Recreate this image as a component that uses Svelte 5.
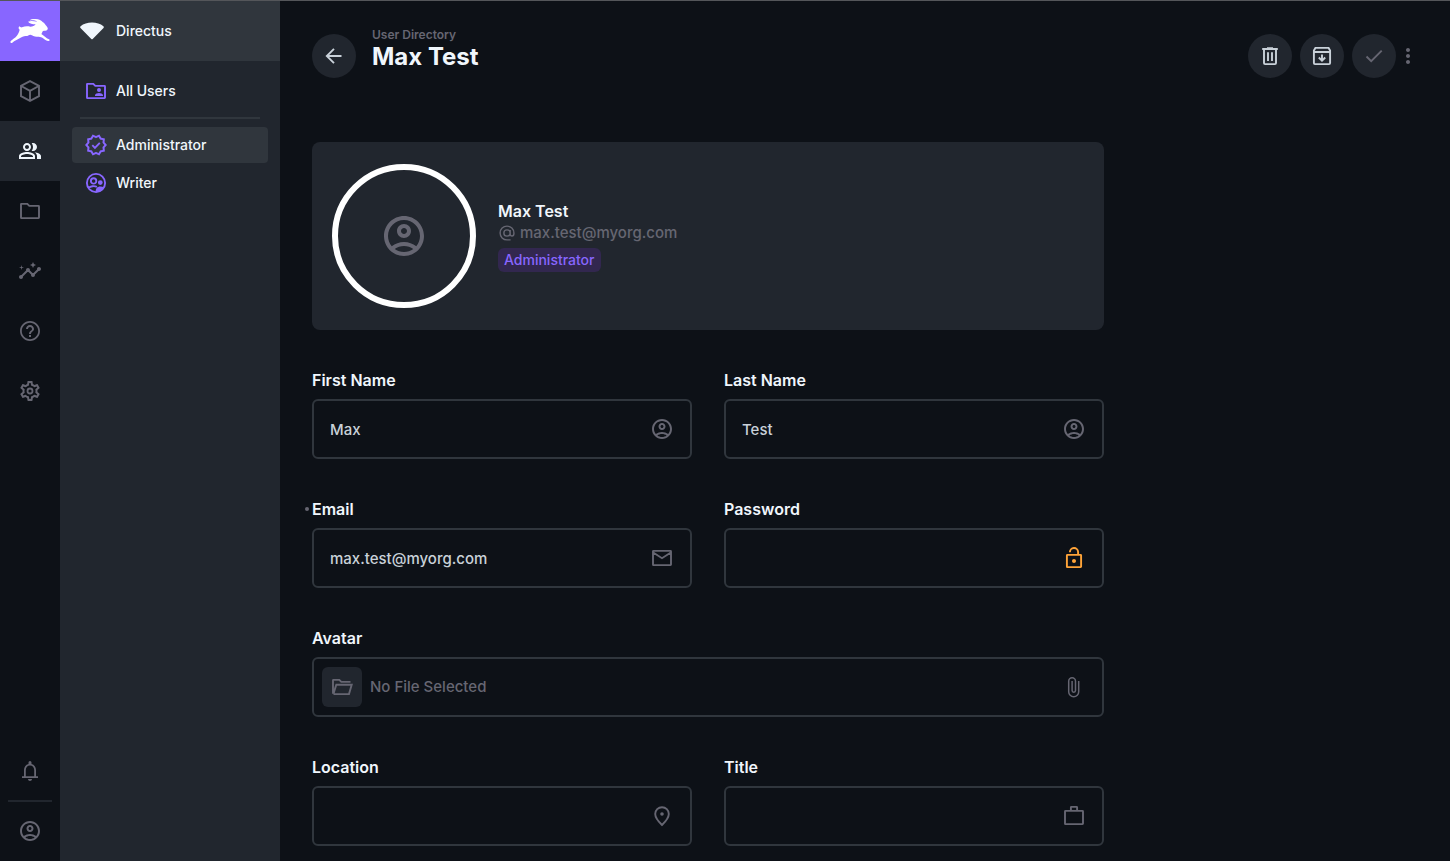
<script>
  const paths = {
    people: 'M16.67 13.13C18.04 14.06 19 15.32 19 17v3h4v-3c0-2.18-3.57-3.47-6.33-3.87z M15 12c2.21 0 4-1.79 4-4s-1.79-4-4-4c-.47 0-.91.1-1.33.24C14.5 5.27 15 6.58 15 8s-.5 2.73-1.33 3.76c.42.14.86.24 1.33.24z M9 12c2.21 0 4-1.79 4-4s-1.79-4-4-4-4 1.79-4 4 1.79 4 4 4zm0-6c1.1 0 2 .9 2 2s-.9 2-2 2-2-.9-2-2 .9-2 2-2z M9 13c-2.67 0-8 1.34-8 4v3h16v-3c0-2.66-5.33-4-8-4zm6 5H3v-.99C3.2 16.29 6.3 15 9 15s5.8 1.29 6 2v1z',
    insights: 'M21 8c-1.45 0-2.26 1.44-1.93 2.51l-3.55 3.56c-.3-.09-.74-.09-1.04 0l-2.55-2.55C12.27 10.45 11.46 9 10 9c-1.45 0-2.27 1.44-1.93 2.52l-4.56 4.55C2.44 15.74 1 16.55 1 18c0 1.1.9 2 2 2 1.45 0 2.26-1.44 1.93-2.51l4.55-4.56c.3.09.74.09 1.04 0l2.55 2.55C12.73 16.55 13.54 18 15 18c1.45 0 2.27-1.44 1.93-2.52l3.56-3.55C21.56 12.26 23 11.45 23 10c0-1.1-.9-2-2-2z M15 9l.94-2.07L18 6l-2.06-.93L15 3l-.92 2.07L12 6l2.08.93z M3.5 11L4 9l2-.5L4 8l-.5-2L3 8l-2 .5L3 9z',
    account: 'M12 2C6.48 2 2 6.48 2 12s4.48 10 10 10 10-4.48 10-10S17.52 2 12 2zM7.35 18.5C8.66 17.56 10.26 17 12 17s3.34.56 4.65 1.5c-1.31.94-2.91 1.5-4.65 1.5s-3.34-.56-4.65-1.5zm10.79-1.38C16.45 15.8 14.32 15 12 15s-4.45.8-6.14 2.12C4.7 15.73 4 13.95 4 12c0-4.42 3.58-8 8-8s8 3.58 8 8c0 1.95-.7 3.73-1.86 5.12z M12 6c-1.93 0-3.5 1.57-3.5 3.5S10.07 13 12 13s3.5-1.57 3.5-3.5S13.93 6 12 6zm0 5c-.83 0-1.5-.67-1.5-1.5S11.17 8 12 8s1.5.67 1.5 1.5S12.83 11 12 11z',
    help: 'M11 18h2v-2h-2v2zm1-16C6.48 2 2 6.48 2 12s4.48 10 10 10 10-4.48 10-10S17.52 2 12 2zm0 18.2c-4.5 0-8.2-3.7-8.2-8.2S7.5 3.8 12 3.8s8.2 3.7 8.2 8.2-3.7 8.2-8.2 8.2zm0-14.2c-2.21 0-4 1.79-4 4h2c0-1.1.9-2 2-2s2 .9 2 2c0 2-3 1.75-3 5h2c0-2.25 3-2.5 3-5 0-2.21-1.79-4-4-4z',
    settings: 'M19.43 12.98c.04-.32.07-.64.07-.98 0-.34-.03-.66-.07-.98l2.11-1.65c.19-.15.24-.42.12-.64l-2-3.46c-.09-.16-.26-.25-.44-.25-.06 0-.12.01-.17.03l-2.49 1c-.52-.4-1.08-.73-1.69-.98l-.38-2.65C14.46 2.18 14.25 2 14 2h-4c-.25 0-.46.18-.49.42l-.38 2.65c-.61.25-1.17.59-1.69.98l-2.49-1c-.06-.02-.12-.03-.18-.03-.17 0-.34.09-.43.25l-2 3.46c-.13.22-.07.49.12.64l2.11 1.65c-.04.32-.07.65-.07.98 0 .33.03.66.07.98l-2.11 1.65c-.19.15-.24.42-.12.64l2 3.46c.09.16.26.25.44.25.06 0 .12-.01.17-.03l2.49-1c.52.4 1.08.73 1.69.98l.38 2.65c.03.24.24.42.49.42h4c.25 0 .46-.18.49-.42l.38-2.65c.61-.25 1.17-.59 1.69-.98l2.49 1c.06.02.12.03.18.03.17 0 .34-.09.43-.25l2-3.46c.12-.22.07-.49-.12-.64l-2.11-1.65zm-1.98-1.71c.04.31.05.52.05.73 0 .21-.02.43-.05.73l-.14 1.13.89.7 1.08.84-.7 1.21-1.27-.51-1.04-.42-.9.68c-.43.32-.84.56-1.25.73l-1.06.43-.16 1.13-.2 1.35h-1.4l-.19-1.35-.16-1.13-1.06-.43c-.43-.18-.83-.41-1.23-.71l-.91-.7-1.06.43-1.27.51-.7-1.21 1.08-.84.89-.7-.14-1.13c-.03-.31-.05-.54-.05-.74s.02-.43.05-.73l.14-1.13-.89-.7-1.08-.84.7-1.21 1.27.51 1.04.42.9-.68c.43-.32.84-.56 1.25-.73l1.06-.43.16-1.13.2-1.35h1.39l.19 1.35.16 1.13 1.06.43c.43.18.83.41 1.23.71l.91.7 1.06-.43 1.27-.51.7 1.21-1.07.85-.89.7.14 1.13z M12 8.6a3.4 3.4 0 1 0 0 6.8 3.4 3.4 0 0 0 0-6.8zm0 5a1.6 1.6 0 1 1 0-3.2 1.6 1.6 0 0 1 0 3.2z',
    verified: 'M23 11.99l-2.44-2.79.34-3.69-3.61-.82L15.4 1.5 12 2.96 8.6 1.5 6.71 4.69 3.1 5.5l.34 3.7L1 11.99l2.44 2.79-.34 3.7 3.61.82 1.89 3.2 3.4-1.47 3.4 1.46 1.89-3.19 3.61-.82-.34-3.69L23 11.99zm-3.95 1.48l-.56.65.08.85.18 1.95-1.9.43-.84.19-.44.74-.99 1.68-1.78-.77-.8-.34-.79.34-1.78.77-.99-1.67-.44-.74-.84-.19-1.9-.43.18-1.96.08-.85-.56-.65L3.67 12l1.29-1.48.56-.65-.09-.86-.18-1.94 1.9-.43.84-.19.44-.74.99-1.68 1.78.77.8.34.79-.34 1.78-.77.99 1.68.44.74.84.19 1.9.43-.18 1.95-.08.85.56.65 1.29 1.47-1.28 1.48z',
    bell: 'M12 22c1.1 0 2-.9 2-2h-4c0 1.1.9 2 2 2zM18 17.2V11c0-3-1.7-5.4-4.5-6.1V3.5a1.5 1.5 0 0 0-3 0v1.4C7.7 5.6 6 8 6 11v6.2H4V19h16v-1.8h-2zm-1.8 0H7.8V11c0-2.5 1.7-4.4 4.2-4.4s4.2 1.9 4.2 4.4v6.2z',
    lock: 'M12 17c1.1 0 2-.9 2-2s-.9-2-2-2-2 .9-2 2 .9 2 2 2z',
    more: 'M12 8c1.1 0 2-.9 2-2s-.9-2-2-2-2 .9-2 2 .9 2 2 2zm0 2c-1.1 0-2 .9-2 2s.9 2 2 2 2-.9 2-2-.9-2-2-2zm0 6c-1.1 0-2 .9-2 2s.9 2 2 2 2-.9 2-2-.9-2-2-2z',
    folderUser: 'M15 13a2 2 0 1 0 0-4 2 2 0 0 0 0 4zM11 17v-.8c0-1.4 2.6-2.2 4-2.2s4 .8 4 2.2v.8z',
    writer: 'M16.3 14a2.4 2.4 0 1 0 0-4.8 2.4 2.4 0 0 0 0 4.8zM11.6 21c0-3.2 1.5-5.4 4.7-5.4 1.5 0 2.9.3 3.9.8A9.5 9.5 0 0 1 11.6 21z'
  };

  const strokes = {
    box: 'M12 2.1l9 4.8v10.2l-9 4.8-9-4.8V6.9zM3.2 7l8.8 4.8L20.8 7M12 11.8v10',
    folder: 'M3 5.2c0-.2.1-.3.3-.3H9.3l2 2H20.5c.3 0 .5.2.5.5V18.6c0 .3-.2.5-.5.5H3.5a.5.5 0 0 1-.5-.5z',
    folderUser: 'M3 5.2c0-.2.1-.3.3-.3H9.3l2 2H20.5c.3 0 .5.2.5.5V18.6c0 .3-.2.5-.5.5H3.5a.5.5 0 0 1-.5-.5z',
    folderOpen: 'M3 18.7V5.3c0-.2.1-.4.4-.4H9.3l2 2H20.5M3.5 19.1H19l2.7-9.4H6.3L3.4 18.9',
    verified: 'M8.3 12.2l2.6 2.6 4.9-4.9',
    writer: 'M21.1 12a9.1 9.1 0 1 1-18.2 0 9.1 9.1 0 0 1 18.2 0zM12.3 9.9a2.7 2.7 0 1 1-5.4 0 2.7 2.7 0 0 1 5.4 0zM4.6 17c1.8-2 5.6-2.4 8.3-1.2',
    back: 'M19.5 12H5M12 4.800L4.800 12l7.200 7.200',
    trash: 'M4.200 5h15.600M9 4.200h6M6 5.400V19c0 .7.4 1.100 1.100 1.100h9.800c.7 0 1.100-.4 1.100-1.100V5.400M10 8.300v8.800M14 8.300v8.800',
    archive: 'M3.900 7.500V19c0 .7.4 1.100 1.100 1.100h14c.7 0 1.100-.4 1.100-1.100V6.400l-1.500-2.500H5.400L3.900 6.400V8H20M12 10.500v6M8.800 13.500l3.200 3.200 3.200-3.200',
    check: 'M4.500 12.500l4.700 4.700L19.700 6.700',
    mail: 'M3.500 4.900h17c.3 0 .5.2.5.5v13.200c0 .3-.2.5-.5.5h-17a.5.5 0 0 1-.5-.5V5.400c0-.3.2-.5.5-.5zM3.200 6.500l8.800 5.700 8.800-5.700',
    lock: 'M5.400 8.900h13.200c.3 0 .5.2.5.5v11.200c0 .3-.2.5-.5.5H5.400a.5.5 0 0 1-.5-.5V9.400c0-.3.2-.5.5-.5zM7.900 6.300a4.100 4.100 0 0 1 8.200-.3v3',
    clip: 'M16.700 6v10.800a5 5 0 0 1-10 0V6.200a3.400 3.400 0 0 1 6.800 0v9.400a1.700 1.700 0 0 1-3.400 0V6',
    pin: 'M12 21c-3.900-3.800-6.800-7.400-6.800-11a6.800 6.800 0 0 1 13.600 0c0 3.600-2.900 7.200-6.800 11z',
    work: 'M3.500 6.900h17c.3 0 .5.2.5.5v12.200c0 .3-.2.5-.5.5h-17a.5.5 0 0 1-.5-.5V7.400c0-.3.2-.5.5-.5zM8.900 6.500V3.400c0-.3.2-.5.5-.5h5.200c.3 0 .5.2.5.5v3.100',
    at: 'M16.200 12a4.200 4.200 0 1 1-8.400 0 4.200 4.200 0 0 1 8.400 0zM16.200 8v5.400c0 1.600 1 2.600 2.500 2.600s2.500-1.200 2.500-2.900V12a9.200 9.200 0 1 0-9.200 9.200h4.800'
  };

  const modules = [
    { icon: 'box', label: 'Content' },
    { icon: 'people', label: 'User Directory', active: true },
    { icon: 'folder', label: 'File Library' },
    { icon: 'insights', label: 'Insights' },
    { icon: 'help', label: 'Documentation' },
    { icon: 'settings', label: 'Settings' }
  ];

  let fields = $state([
    { id: 'first', label: 'First Name', type: 'text', value: 'Max', icon: 'account' },
    { id: 'last', label: 'Last Name', type: 'text', value: 'Test', icon: 'account' },
    { id: 'email', label: 'Email', type: 'email', value: 'max.test@myorg.com', icon: 'mail', required: true },
    { id: 'password', label: 'Password', type: 'password', value: '', icon: 'lock', warn: true },
    { id: 'avatar', label: 'Avatar', file: true },
    { id: 'location', label: 'Location', type: 'text', value: '', icon: 'pin' },
    { id: 'title', label: 'Title', type: 'text', value: '', icon: 'work' }
  ]);
</script>

{#snippet icon(name)}
  <svg class="icon" viewBox="0 0 24 24" aria-hidden="true">
    {#if paths[name]}<path fill="currentColor" fill-rule="evenodd" d={paths[name]} />{/if}
    {#if strokes[name]}<path fill="none" stroke="currentColor" stroke-width={name === 'clip' ? 1.5 : 1.9} d={strokes[name]} />{/if}
    {#if name === 'pin'}<circle cx="12" cy="10" r="1.8" fill="currentColor" />{/if}
  </svg>
{/snippet}

<div class="app">
  <nav class="modules" aria-label="Modules">
    <a class="logo" href="#home" aria-label="Directus">
      <svg viewBox="0 0 150 102" aria-hidden="true">
        <path fill="#fff" d="M43 37C40 40 40 45 44 47C42 54 40 60 35 66C30 72 23 76 18 80C14 84 17 89 22 86C29 80 37 77 44 73C49 69 56 66 62 66C67 67 71 63 76 62C83 64 89 69 97 68C103 68 107 68 112 71C118 74 122 80 129 81C134 82 136 78 132 76C127 74 124 71 120 68C116 65 112 62 109 60C112 57 111 54 114 51C118 49 124 51 127 47C130 45 128 41 125 37C121 33 120 28 113 24C110 19 100 14 89 15C82 15 76 15 74 20C81 18 90 19 97 23C87 21 77 19 69 23C74 29 82 31 92 31C89 36 83 38 76 38C68 36 60 36 51 40C48 41 46 39 43 37Z" />
      </svg>
    </a>
    {#each modules as m}
      <a class="module" class:active={m.active} href="#{m.icon}" aria-label={m.label}>{@render icon(m.icon)}</a>
    {/each}
    <div class="bottom">
      <button class="module" aria-label="Notifications">{@render icon('bell')}</button>
      <a class="module profile" href="#profile" aria-label="Profile">{@render icon('account')}</a>
    </div>
  </nav>

  <aside class="side">
    <div class="project">
      <svg viewBox="0 0 24 18" aria-hidden="true"><path fill="#f0f6fc" d="M.5 6C0 5.4 0 4.700.6 4.200 3.500 1.700 7.500.5 12 .5s8.500 1.200 11.400 3.700c.6.5.6 1.200.1 1.800L12.700 17c-.4.4-1 .4-1.400 0z" /></svg>
      <span>Directus</span>
    </div>
    <nav class="links" aria-label="Users">
      <a href="#all">{@render icon('folderUser')}<span>All Users</span></a>
      <hr />
      <a class="current" href="#administrator">{@render icon('verified')}<span>Administrator</span></a>
      <a href="#writer">{@render icon('writer')}<span>Writer</span></a>
    </nav>
  </aside>

  <main>
    <header>
      <button class="round" aria-label="Back">{@render icon('back')}</button>
      <div class="heading">
        <a href="#users">User Directory</a>
        <h1>Max Test</h1>
      </div>
      <div class="actions">
        <button class="round" aria-label="Delete">{@render icon('trash')}</button>
        <button class="round" aria-label="Archive">{@render icon('archive')}</button>
        <button class="round" aria-label="Save" disabled>{@render icon('check')}</button>
      </div>
      <button class="more" aria-label="More options">{@render icon('more')}</button>
    </header>

    <div class="content">
      <section class="card">
        <div class="avatar">{@render icon('account')}</div>
        <div class="info">
          <strong>Max Test</strong>
          <span class="mail">{@render icon('at')}max.test@myorg.com</span>
          <span class="chip">Administrator</span>
        </div>
      </section>

      <form>
        {#each fields as f (f.id)}
          <div class="field" class:full={f.file}>
            <label for={f.id} class:required={f.required}>{f.label}</label>
            {#if f.file}
              <button type="button" id={f.id} class="box file">
                <span class="thumb">{@render icon('folderOpen')}</span>
                <span class="empty">No File Selected</span>
                {@render icon('clip')}
              </button>
            {:else}
              <div class="box" class:warn={f.warn}>
                <input id={f.id} type={f.type} autocomplete="off" bind:value={f.value} />
                {@render icon(f.icon)}
              </div>
            {/if}
          </div>
        {/each}
      </form>
    </div>
  </main>
</div>

<style>
  :global(body) {
    background: #0d1117;
  }
  .app {
    box-sizing: border-box;
    display: flex;
    height: 100vh;
    overflow: hidden;
    border-top: 1px solid #54565a;
    background: #0d1117;
    color: #f0f6fc;
    font: 500 15px/22px Inter, sans-serif;
  }
  .app *,
  .app *::before {
    box-sizing: border-box;
  }
  a {
    color: inherit;
    text-decoration: none;
  }
  button,
  input {
    padding: 0;
    border: 0;
    background: none;
    color: inherit;
    font: inherit;
  }
  .icon {
    display: block;
    flex: none;
    width: 24px;
    height: 24px;
  }
  .modules {
    display: flex;
    flex: none;
    flex-direction: column;
    width: 60px;
    color: #666672;
  }
  .logo,
  .module {
    display: flex;
    align-items: center;
    justify-content: center;
    width: 60px;
    height: 60px;
  }
  .logo {
    background: #8866ff;
  }
  .logo svg {
    width: 50px;
    height: 34px;
  }
  .active {
    background: #21262e;
    color: #f0f6fc;
  }
  .bottom {
    margin-top: auto;
  }
  .profile {
    position: relative;
  }
  .profile::before {
    position: absolute;
    top: -1px;
    right: 8px;
    left: 8px;
    height: 2px;
    background: #21262e;
    content: '';
  }
  .side {
    flex: none;
    width: 220px;
    background: #21262e;
    font-size: 14px;
  }
  .project {
    display: flex;
    align-items: center;
    gap: 12px;
    height: 60px;
    padding: 0 20px;
    background: #30363d;
  }
  .project svg {
    width: 24px;
    height: 18px;
  }
  .links {
    display: flex;
    flex-direction: column;
    gap: 2px;
    padding: 12px;
  }
  .links a {
    display: flex;
    align-items: center;
    gap: 8px;
    height: 36px;
    padding: 0 12px;
    border-radius: 4px;
  }
  .links .icon {
    color: #8866ff;
  }
  .links .current {
    background: #30363d;
  }
  hr {
    height: 2px;
    margin: 6px 8px;
    border: 0;
    background: #30363d;
  }
  main {
    flex: 1;
    min-width: 0;
    padding: 33px 30px 32px 32px;
    overflow: hidden;
  }
  header {
    display: flex;
    align-items: center;
    height: 44px;
    margin-bottom: 64px;
  }
  .round {
    display: flex;
    flex: none;
    align-items: center;
    justify-content: center;
    width: 44px;
    height: 44px;
    border-radius: 50%;
    background: #21262e;
    color: #c9d1d9;
  }
  .round:disabled {
    color: #666672;
  }
  .heading {
    flex: 1;
    min-width: 0;
    padding: 0 16px 14px;
  }
  .heading a {
    display: block;
    color: #666672;
    font-size: 12px;
    font-weight: 600;
    line-height: 16px;
  }
  h1 {
    margin: 0;
    font-size: 24px;
    font-weight: 700;
    line-height: 28px;
  }
  .actions {
    display: flex;
    gap: 8px;
  }
  .more {
    color: #666672;
  }
  .content {
    max-width: 792px;
  }
  .card {
    display: flex;
    align-items: center;
    gap: 22px;
    height: 188px;
    padding: 0 20px;
    border-radius: 8px;
    background: #21262e;
  }
  .avatar {
    display: flex;
    flex: none;
    align-items: center;
    justify-content: center;
    width: 144px;
    height: 144px;
    border: 6px solid #fff;
    border-radius: 50%;
    color: #666672;
  }
  .avatar .icon {
    width: 48px;
    height: 48px;
  }
  .info {
    display: flex;
    flex-direction: column;
    align-items: flex-start;
  }
  strong,
  label {
    font-size: 16px;
    font-weight: 600;
  }
  .mail {
    display: flex;
    align-items: center;
    gap: 4px;
    color: #666672;
  }
  .mail .icon {
    width: 18px;
    height: 18px;
  }
  .chip {
    margin-top: 4px;
    padding: 1px 6px;
    border-radius: 6px;
    background: #32274f;
    color: #8866ff;
    font-size: 14px;
  }
  form {
    display: grid;
    grid-template-columns: 1fr 1fr;
    gap: 40px 32px;
    margin-top: 40px;
  }
  .full {
    grid-column: 1 / -1;
  }
  label {
    position: relative;
    display: block;
    width: max-content;
    margin-bottom: 8px;
    line-height: 21px;
  }
  .required::before {
    position: absolute;
    top: 8px;
    left: -7px;
    width: 4px;
    height: 4px;
    border-radius: 50%;
    background: #666672;
    content: '';
  }
  .box {
    display: flex;
    align-items: center;
    width: 100%;
    height: 60px;
    padding: 0 16px;
    border: 2px solid #30363d;
    border-radius: 6px;
    color: #666672;
  }
  .box input {
    flex: 1;
    min-width: 0;
    height: 100%;
    outline: 0;
    color: #c9d1d9;
  }
  .warn {
    color: #ffa439;
  }
  .file {
    padding-left: 8px;
    text-align: left;
  }
  .thumb {
    display: flex;
    align-items: center;
    justify-content: center;
    width: 40px;
    height: 40px;
    border-radius: 6px;
    background: #21262e;
  }
  .empty {
    flex: 1;
    padding-left: 8px;
  }
</style>
